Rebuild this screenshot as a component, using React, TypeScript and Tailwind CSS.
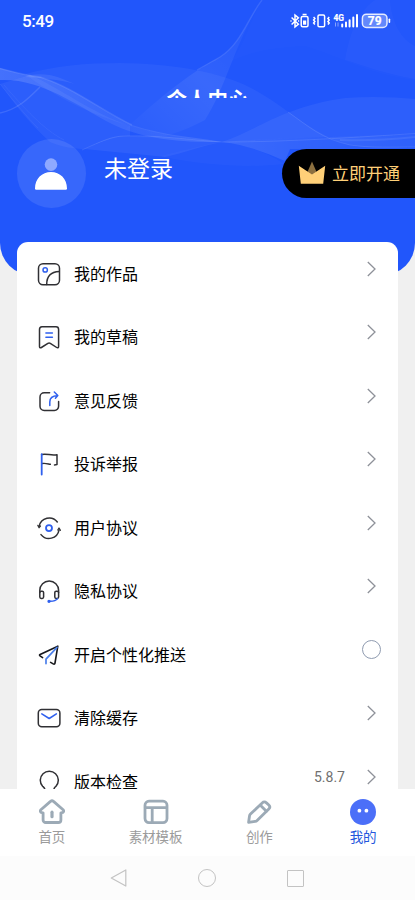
import type { ReactNode } from 'react';

const ink = '#303034';
const blue = '#2f60ee';

function Waves() {
  return (
    <svg className="absolute inset-0 h-[274px] w-full" viewBox="0 0 415 274" fill="none">
      <defs>
        <linearGradient id="ribbon" x1="0" y1="0" x2="1" y2="0">
          <stop offset="0" stopColor="#fff" stopOpacity="0.16" />
          <stop offset="0.5" stopColor="#fff" stopOpacity="0.07" />
          <stop offset="1" stopColor="#fff" stopOpacity="0.12" />
        </linearGradient>
        <linearGradient id="fall" x1="1" y1="0" x2="0" y2="1">
          <stop offset="0" stopColor="#fff" stopOpacity="0.02" />
          <stop offset="0.5" stopColor="#fff" stopOpacity="0.07" />
          <stop offset="1" stopColor="#fff" stopOpacity="0" />
        </linearGradient>
        <linearGradient id="fan" x1="0" y1="0" x2="1" y2="0">
          <stop offset="0" stopColor="#fff" stopOpacity="0.12" />
          <stop offset="1" stopColor="#fff" stopOpacity="0.02" />
        </linearGradient>
      </defs>
      <path d="M25 74C55 66 85 63 120 63C170 64 212 70 245 85C283 103 305 130 345 144C365 149 390 148 415 147V134C350 136 290 138 222 142C150 137 80 116 25 74Z" fill="#fff" fillOpacity="0.045" />
      <path d="M0 84C16 106 30 124 50 142C62 147 75 149 85 149C100 142 115 136 130 136L130 126C90 112 60 88 30 75Z" fill="#fff" fillOpacity="0.05" />
      <path d="M0 68C14 72 24 75 40 77C75 88 100 110 132 125C165 136 195 137 222 142C180 143 140 138 112 124C75 104 40 78 0 80Z" fill="url(#ribbon)" />
      <path d="M30 75C50 72 60 78 75 84C60 80 45 78 25 77Z" fill="#fff" fillOpacity="0.08" />
      <path d="M262 0C248 18 241 44 220 57C195 70 165 92 120 134C150 142 170 138 205 120C225 90 236 40 262 0Z" fill="url(#fall)" />
      <path d="M85 149C102 141 112 136 125 136C160 135 190 140 222 142C200 146 185 153 165 157C140 154 110 152 85 149Z" fill="#fff" fillOpacity="0.06" />
      <path d="M222 142C246 145 265 152 285 161L290 149H415V134C350 137 290 137 222 142Z" fill="url(#fan)" />
      <path d="M222 142C258 130 282 107 345 98C370 96 395 97 415 99V134C350 137 290 137 222 142Z" fill="#fff" fillOpacity="0.055" />
      <path d="M160 156C205 166 250 168 284 164C265 151 245 145 222 142C200 145 180 152 160 156Z" fill="#fff" fillOpacity="0.025" />
      <path d="M230 62C250 50 285 47 305 46C345 58 370 75 415 80V0H262C250 20 245 45 230 62Z" fill="#fff" fillOpacity="0.012" />
      <path d="M345 60C350 30 360 10 375 0H390C392 24 402 40 415 46V79C385 74 365 66 345 60Z" fill="#fff" fillOpacity="0.025" />
      <path d="M0 68.5C14 72 24 75 40 77C75 88 100 110 132 125" stroke="#fff" strokeOpacity="0.1" strokeWidth="1.6" />
      <path d="M262 0C248 18 241 44 220 57C212 62 205 65 197 70" stroke="#fff" strokeOpacity="0.1" strokeWidth="1.4" />
      <path d="M0 113C18 109 28 99 40 87" stroke="#fff" strokeOpacity="0.12" strokeWidth="1.5" />
      <path d="M0 84C16 104 28 118 38 128M4 85C24 108 44 130 64 140" stroke="#fff" strokeOpacity="0.05" />
      <path d="M82 150C102 141 112 136 125 136C160 135 190 140 222 142C290 142 360 137 415 133.5M288 112C308 126 322 139 350 145C370 148 395 147 415 147" stroke="#fff" strokeOpacity="0.1" />
      <path d="M340 140C370 141 395 139 415 137" stroke="#fff" strokeOpacity="0.08" strokeWidth="2" />
    </svg>
  );
}

function StatusIcons() {
  return (
    <svg className="h-4 w-[104px]" viewBox="0 0 104 16" fill="none" stroke="#fff" strokeWidth="1.5">
      <path d="M1.6 4.5L8.4 11.2L5 14V2L8.4 4.8L1.6 11.5" />
      <path d="M.4 8h1.2M8 8h1.2" />
      <rect x="11.2" y="3.4" width="6.8" height="10.4" rx="1.5" />
      <path d="M12.6 1.4h4" />
      <rect x="13" y="7.5" width="3.2" height="4.2" fill="#fff" stroke="none" />
      <rect x="28" y="2" width="6.6" height="11.8" rx="1.3" />
      <path d="M23.6 4l1.3 1.5L23.6 7l1.3 1.5-1.3 1.5 1.3 1.5M39.2 4l-1.3 1.5L39.2 7l-1.3 1.5 1.3 1.5-1.3 1.5" strokeWidth="1.5" />
      <text x="43.5" y="7.6" fill="#fff" stroke="#fff" strokeWidth="0.2" fontFamily="Roboto, sans-serif" fontWeight="700" fontSize="8.5" textLength="10.5" lengthAdjust="spacingAndGlyphs">4G</text>
      <path d="M45.5 9.5v4M48 9.5v4" strokeOpacity="0.45" strokeWidth="1" />
      <path d="M52.2 13.6v-2M56 13.6v-4M59.6 13.6V7.2M63.3 13.6V4.5M67 13.6V2" strokeWidth="2" strokeLinecap="round" />
      <rect x="72.4" y="1.2" width="24.6" height="13.2" rx="4" fill="#fff" fillOpacity="0.28" strokeOpacity="0.85" />
      <path d="M99.4 6.3v3" strokeWidth="1.6" strokeLinecap="round" />
      <text x="84.7" y="12.1" textAnchor="middle" fill="#fff" stroke="#fff" strokeWidth="0.2" fontFamily="Roboto, sans-serif" fontWeight="700" fontSize="12">79</text>
    </svg>
  );
}

function Icon({ children }: { children: ReactNode }) {
  return (
    <svg className="h-6 w-6 shrink-0" viewBox="0 0 24 24" fill="none" stroke={ink} strokeWidth="1.5" strokeLinecap="round" strokeLinejoin="round">
      {children}
    </svg>
  );
}

const rows: { label: string; icon: ReactNode; end?: 'toggle' | 'version' }[] = [
  {
    label: '我的作品',
    icon: (
      <>
        <rect x="1.5" y="1.7" width="21" height="21" rx="4.5" />
        <path d="M22.3 9.5C14 9.9 9.6 14.7 9.7 22.5" />
        <circle cx="8.2" cy="7.9" r="2.2" stroke={blue} />
      </>
    ),
  },
  {
    label: '我的草稿',
    icon: (
      <>
        <path d="M5 1.8h14a2.6 2.6 0 0 1 2.6 2.6v17.2c0 1.2-1 1.5-1.9.9l-6.4-4.1a2.2 2.2 0 0 0-2.4 0L4.4 22.5c-1 .6-1.9.3-1.9-.9V4.4A2.6 2.6 0 0 1 5 1.8Z" />
        <path d="M8.9 8h6.5M8.9 12.2h6.5" stroke={blue} />
      </>
    ),
  },
  {
    label: '意见反馈',
    icon: (
      <>
        <path d="M12.6 3.8H7.2A4.2 4.2 0 0 0 3 8v9.2a4.2 4.2 0 0 0 4.2 4.2h10.2a4.2 4.2 0 0 0 4.2-4.2v-4.7" />
        <path d="M12.8 16.4v-3.5c0-4 2.9-6.1 7.8-6.4M17.3 3L20.8 6.5l-2.4 2.8" stroke={blue} />
      </>
    ),
  },
  {
    label: '投诉举报',
    icon: (
      <>
        <path d="M4.8 2.5C10 1.1 14 4.2 20 2.7V12.6L17.5 12.9M5.5 11.5C8 11 10.5 11.8 13.3 12.3" />
        <path d="M4.7 2.2v20.3" stroke={blue} strokeWidth="1.8" />
      </>
    ),
  },
  {
    label: '用户协议',
    icon: (
      <>
        <path d="M2.2 10.2A10.2 10.2 0 0 1 20.3 6M22 14.1A10.2 10.2 0 0 1 4 18.6" />
        <path d="M.9 9.4l1.2 2.3L3.4 10M20.8 14L22 12l1.4 2.3" strokeWidth="1.3" />
        <circle cx="12" cy="12.1" r="3" stroke={blue} strokeWidth="1.8" />
      </>
    ),
  },
  {
    label: '隐私协议',
    icon: (
      <>
        <path d="M2.8 13.5v-2.2a9.3 9.3 0 0 1 18.8 0v2.2" />
        <rect x="2.8" y="12.2" width="3.8" height="7.2" rx="1.4" />
        <rect x="17.8" y="12.2" width="3.8" height="7.2" rx="1.4" />
        <path d="M20.4 19.9c-1.6 2-4.4 2.3-7.2 2.4" stroke={blue} />
        <circle cx="12" cy="22.3" r=".9" fill={blue} stroke={blue} />
      </>
    ),
  },
  {
    label: '开启个性化推送',
    end: 'toggle',
    icon: (
      <>
        <path d="M5.6 14.6L3 12.9c-.7-.5-.6-1 .1-1.4L20.8 3.2 18 20c-.2 1.2-.9 1.5-1.8.9l-2.6-1.5" stroke="#17181c" strokeWidth="1.6" />
        <path d="M20 4.3L9 16.2V20.6" stroke="#4b7fea" strokeWidth="1.7" />
      </>
    ),
  },
  {
    label: '清除缓存',
    icon: (
      <>
        <rect x="1.3" y="3.6" width="21.6" height="17.2" rx="3.5" />
        <path d="M4.8 7.8L12.2 12.5l7.2-4.7" stroke={blue} />
      </>
    ),
  },
  {
    label: '版本检查',
    end: 'version',
    icon: <path d="M8 20.2c.1-2-1-2.7-2.4-4A9 9 0 1 1 19 16.2c-1.3 1.4-2.3 2-2.2 4" />,
  },
];

const tabs: { label: string; icon: ReactNode; active?: boolean }[] = [
  {
    label: '首页',
    icon: (
      <>
        <path d="M11.5 2.4L1.9 10.8c-1.1 1.1-.6 2.8 1 2.9l1.2.1v7.1a2.6 2.6 0 0 0 2.6 2.6h12.6a2.6 2.6 0 0 0 2.6-2.6v-7.1l1.2-.1c1.6-.1 2.1-1.8 1-2.9L14.5 2.4a2.2 2.2 0 0 0-3 0Z" />
        <path d="M13 13.2v4.5" strokeWidth="3.2" />
      </>
    ),
  },
  {
    label: '素材模板',
    icon: (
      <>
        <rect x="2" y="2.2" width="22" height="21.4" rx="4" />
        <path d="M2.3 8.7h21.4M9.2 8.7v14.8" />
      </>
    ),
  },
  {
    label: '创作',
    icon: (
      <>
        <path d="M2.6 23.3l.9-6.3c.1-.7.5-1.4 1-1.9L16.2 3.9c1.3-1.3 3-1.3 4.3 0L22.8 6c1.3 1.3 1.3 2.8 0 4.1L11.1 21.4c-.5.5-1.2.9-1.9 1Z" />
        <path d="M14.6 6.4l5.8 5.8" />
      </>
    ),
  },
  {
    label: '我的',
    active: true,
    icon: (
      <>
        <circle cx="13" cy="13" r="13" fill="#4b6ff8" stroke="none" />
        <circle cx="9.4" cy="11.7" r="1.9" fill="#fff" stroke="none" />
        <circle cx="16.4" cy="11.7" r="1.9" fill="#fff" stroke="none" />
      </>
    ),
  },
];

export default function App() {
  return (
    <div className="flex h-[900px] w-full flex-col overflow-hidden bg-[#f0f0f0] font-['Noto_Sans_CJK_SC',sans-serif]">
      <div className="flex h-[789px] flex-col overflow-hidden">
        <header className="relative h-[275px] shrink-0 overflow-hidden rounded-b-[32px] bg-[#2156fb] text-white">
          <Waves />
          <div className="relative flex h-[41px] items-center justify-between pr-[21px] pl-[22px]">
            <span className="pt-0.5 font-['Roboto',sans-serif] text-[17px] font-medium tracking-[-0.4px]">5:49</span>
            <StatusIcons />
          </div>
          <div className="relative h-[57px] overflow-hidden pt-[45px]">
            <h1 className="text-center text-[20.5px] leading-6 font-bold">个人中心</h1>
          </div>
          <div className="relative mt-10 flex h-[70px] items-center pl-[17px]">
            <div className="flex h-[69px] w-[69px] items-center justify-center rounded-full bg-white/10 pt-px pr-px">
              <svg className="h-8 w-8" viewBox="0 0 32 32">
                <circle cx="16" cy="6.6" r="6.3" fill="#8ea9ff" />
                <path d="M1.2 31.8A1.2 1.2 0 0 1 0 30.5C0 20.8 7 14 16 14S32 20.8 32 30.5a1.2 1.2 0 0 1-1.2 1.3Z" fill="#fff" />
              </svg>
            </div>
            <span className="mb-3 ml-[18px] text-[23px] leading-8">未登录</span>
            <button className="ml-auto flex h-[49px] w-[133px] items-center rounded-l-full bg-black pl-4 text-[#ffd078]">
              <svg className="h-6 w-7" viewBox="0 0 28 24">
                <path d="M14 .6L19 12l-5 3-5-3Z" fill="#8c7040" />
                <path d="M.8 4.8L14 13.4l13.2-8.6-2 18h-22.4Z" fill="#ffd078" />
              </svg>
              <span className="ml-1.5 text-[17px] leading-6">立即开通</span>
            </button>
          </div>
        </header>

        <main className="relative mx-[17px] -mt-[33px] shrink-0 rounded-t-[11px] bg-white">
          {rows.map((row) => (
            <div key={row.label} className="flex h-[63.5px] items-center pr-[22px] pl-5">
              <Icon>{row.icon}</Icon>
              <span className="ml-[13px] pb-0.5 text-base text-black">{row.label}</span>
              <span className="ml-auto flex items-center pb-2.5">
                {row.end === 'version' && (
                  <span className="mr-[22px] font-['Roboto',sans-serif] text-[14px] leading-4 text-[#707070]">5.8.7</span>
                )}
                {row.end === 'toggle' ? (
                  <span className="-mr-[5px] h-[19px] w-[19px] rounded-full border border-[#8f9bb0]" />
                ) : (
                  <svg className="h-4 w-[9px]" viewBox="0 0 9 16" fill="none" stroke="#8e9199" strokeWidth="1.3">
                    <path d="M.8 1l7.2 7-7.2 7" />
                  </svg>
                )}
              </span>
            </div>
          ))}
        </main>
      </div>

      <nav className="grid h-[67px] shrink-0 grid-cols-4 bg-white">
        {tabs.map((tab) => (
          <div key={tab.label} className="flex flex-col items-center pt-2.5">
            <svg className="h-[26px] w-[26px]" viewBox="0 0 26 26" fill="none" stroke="#9caab6" strokeWidth="2.8" strokeLinecap="round" strokeLinejoin="round">
              {tab.icon}
            </svg>
            <span className={tab.active ? 'mt-px text-[13.5px] leading-5 text-[#2456dd]' : 'mt-px text-[13.5px] leading-5 text-[#9b9b9b]'}>
              {tab.label}
            </span>
          </div>
        ))}
      </nav>

      <footer className="flex h-11 shrink-0 items-center gap-[70px] bg-[#fcfcfc] pl-[110px]">
        <svg className="h-[18px] w-[18px]" viewBox="0 0 18 18" fill="none" stroke="#c3c3c3" strokeWidth="1.2" strokeLinejoin="round">
          <path d="M1.3 9L15.8 .9v16.2Z" />
        </svg>
        <span className="h-[18px] w-[18px] rounded-full border border-[#c3c3c3]" />
        <span className="ml-px h-[17px] w-[17px] rounded-[1px] border border-[#c3c3c3]" />
      </footer>
    </div>
  );
}
